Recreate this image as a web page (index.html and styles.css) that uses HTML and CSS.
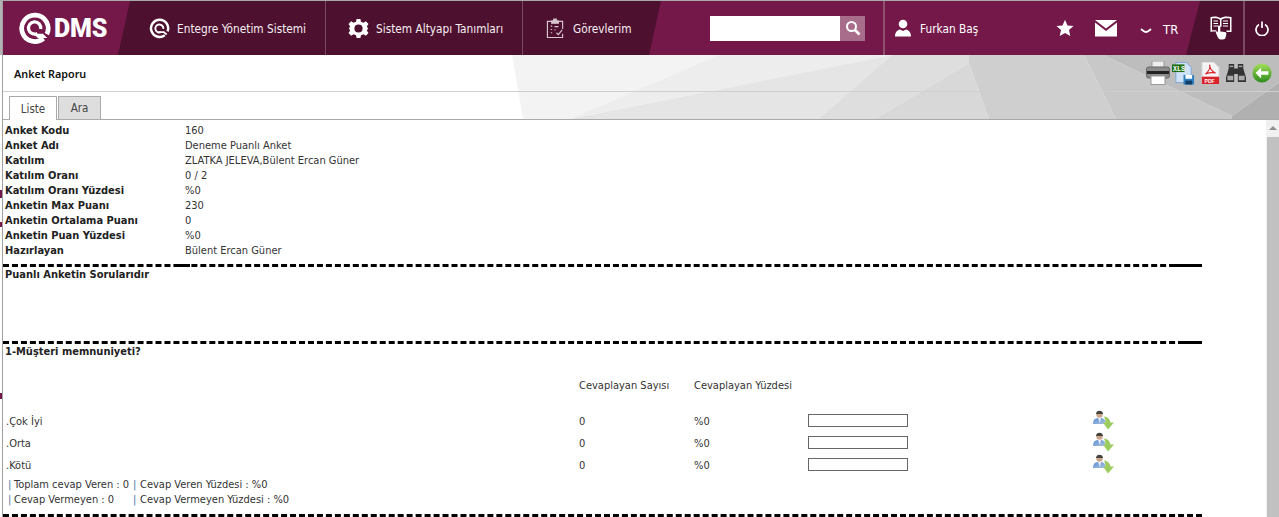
FILE: index.html
```html
<!DOCTYPE html>
<html lang="tr">
<head>
<meta charset="utf-8">
<title>Anket Raporu</title>
<link rel="stylesheet" href="styles.css">
</head>
<body>
<div class="edge"><i class="spot s1"></i><i class="spot s2"></i><i class="spot s3"></i></div>
<div class="app">
  <header class="topbar">
    <div class="brand">
      <svg class="logo-q" viewBox="0 0 36 36" width="34" height="34"><path d="M27 29A14 14 0 1 1 30.500 24.500" fill="none" stroke="#fff" stroke-width="5"/><path d="M20.500 23.800A6.500 6.500 0 1 1 24 19" fill="none" stroke="#fff" stroke-width="3.500"/><path d="M16 24h10.500l4.500 4.500H21z" fill="#fff"/></svg>
      <span class="logo-text">DMS</span>
    </div>
    <nav class="nav">
      <a class="nav-item w1">
        <svg viewBox="0 0 22 22" width="21" height="21" fill="none" stroke="#fff"><path d="M16.500 18A9 9 0 1 1 19.500 14" stroke-width="2.600"/><path d="M12.500 14.800A4.200 4.200 0 1 1 15 11.500" stroke-width="2"/><path d="M10 14.800h5.500l3 2.500" stroke-width="1.800"/></svg>
        <span>Entegre Yönetim Sistemi</span>
      </a>
      <a class="nav-item w2">
        <svg viewBox="0 0 22 22" width="21" height="21"><path fill="#fff" d="M9 1h4l.6 3 2.600 1.100 2.500-1.700 2.800 2.800-1.700 2.500L20.900 11l-1.100 2.300 1.700 2.500-2.800 2.800-2.500-1.700-2.600 1.100L13 21H9l-.6-3-2.600-1.100-2.500 1.700-2.800-2.800 1.700-2.500L1.100 11l1.100-2.300L.5 6.200l2.800-2.800 2.500 1.700L8.400 4z"/><circle cx="11" cy="11" r="4.300" fill="#4d102f"/></svg>
        <span>Sistem Altyapı Tanımları</span>
      </a>
      <a class="nav-item w3">
        <svg viewBox="0 0 20 22" width="19" height="21" fill="none" stroke="#d9c6d0" stroke-width="1.200"><path d="M5.500 3.500H1.500v17h16v-4M13.500 3.500h4v8"/><path d="M6 5.500V3h2.200V1.200h2.600V3H13v2.500z" fill="#d9c6d0"/><path d="M5 8.500h1.500M5 12h1.500M5 15.500h1.500M9 9h4M9 12.500h1"/><path d="M11 15.500l2 2 4-5"/></svg>
        <span>Görevlerim</span>
      </a>
    </nav>
    <form class="search">
      <input class="search-input" type="text" aria-label="Ara">
      <button class="search-btn" type="button" aria-label="Ara"><svg viewBox="0 0 16 16" width="16" height="16" fill="none" stroke="#fff"><circle cx="6.500" cy="6.500" r="4.500" stroke-width="2"/><path d="M10 10l4.500 4.500" stroke-width="2.600"/></svg></button>
    </form>
    <div class="user">
      <svg viewBox="0 0 16 18" width="16" height="18" fill="#fff"><circle cx="8" cy="5" r="4.300"/><path d="M0 17.500c0-4.500 2.500-6.500 5-7l3 1.500 3-1.500c2.500.5 5 2.500 5 7z"/></svg>
      <span>Furkan Baş</span>
    </div>
    <div class="tools">
      <svg class="star" viewBox="0 0 18 18" width="18" height="18"><path fill="#fff" d="M9 .8l2.500 5.600 6 .6-4.500 4 1.300 6L9 14l-5.300 3 1.300-6L.5 7l6-.6z"/></svg>
      <svg class="mail" viewBox="0 0 22 17" width="22" height="17"><path fill="#fff" d="M0 0h22L11 8.500zM0 2.500l11 8.500 11-8.500V16.500H0z"/></svg>
      <svg class="chev" viewBox="0 0 12 6" width="12" height="6" fill="none" stroke="#fff" stroke-width="1.800"><path d="M1 1c2 1.500 3.500 3 5 3s3-1.500 5-3"/></svg>
      <span class="lang">TR</span>
    </div>
    <div class="side">
      <div class="side-btn book">
        <svg viewBox="0 0 22 24" width="22" height="24"><path fill="#fff" d="M.5 1C4 0 8 .3 10.500 2c2.500-1.700 6.500-2 11-1v15h-5v-1.500h3.500V2.500c-3-.5-6.500-.3-8.500 1.200v7h-1.500v-7C8 2.200 5 2 2 2.500v11.800c1.500-.2 3-.2 4.500.1v1.400C4.500 15.500 2.500 15.500.5 16z"/><path stroke="#fff" stroke-width="1" d="M3.500 5H8M3.500 7.500H8M3.500 10H8M13 5h5M13 7.500h5M13 10h5"/><path fill="#fff" d="M8 10.500c0-1.400 2.300-1.400 2.300 0v5l4.500.5c1.500.3 1.700 1.200 1.500 2.500l-.7 3c-.3 1.200-1 2-3 2h-2c-1.500 0-2-1-3-2.500L6 17c-.7-1.200.8-2 1.800-1l.2.500z"/></svg>
      </div>
      <div class="side-btn power">
        <svg viewBox="0 0 14 15" width="14" height="15" fill="none" stroke="#fff" stroke-width="1.700"><path d="M4 3.500a6 6 0 1 0 6 0M7 .5v6.500"/></svg>
      </div>
    </div>
  </header>

  <section class="pagehead">
    <svg class="poly" viewBox="0 0 1276 65" preserveAspectRatio="none" aria-hidden="true">
      <path fill="#f3f3f3" d="M509 0H715L567 65H520z"/>
      <path fill="#ededed" d="M715 0H889L567 65z"/>
      <path fill="#e5e5e5" d="M889 0L815 65H567z"/>
      <path fill="#dedede" d="M889 0H966V8L872 65H815z"/>
      <path fill="#d8d8d8" d="M966 8L986 65H872z"/>
      <path fill="#cfcfcf" d="M966 0H1081L1113 65H986L966 8z"/>
      <path fill="#c8c8c8" d="M1081 0H1100L1229 62V65H1113z"/>
      <path fill="#bdbdbd" d="M1100 0H1276V28L1229 62z"/>
      <path fill="#b0b0b0" d="M1276 28V65H1229V62z"/>
    </svg>
    <div class="titlebar">
      <h1>Anket Raporu</h1>
      <div class="actions">
        <svg class="a-print" viewBox="0 0 24 24" width="24" height="24"><rect x="6" y="0" width="12" height="7" fill="#eee" stroke="#999"/><rect x="0.500" y="6" width="23" height="11" rx="2" fill="#8b8b8b" stroke="#666"/><rect x="1" y="10" width="22" height="3" fill="#222"/><rect x="5" y="15" width="14" height="8.500" fill="#fff" stroke="#999"/></svg>
        <svg viewBox="0 0 24 24" width="23" height="24"><path d="M4 1h11l5 5v16H4z" fill="#cfe2f7" stroke="#7ea6d3"/><rect x="0" y="3" width="13" height="8" fill="#1f6e12"/><rect x="12" y="14" width="11" height="10" fill="#2f7fc1"/><rect x="14" y="14" width="7" height="4" fill="#fff"/><rect x="14" y="20" width="7" height="4" fill="#123e66"/><text class="xls" x="1" y="10">XLS</text></svg>
        <svg viewBox="0 0 22 24" width="19" height="22" preserveAspectRatio="none"><path d="M1 0h14l6 6v18H1z" fill="#f4f4f4" stroke="#ccc"/><path d="M5 13c3-1 6-6 5-10 0 4 3 8 7 9-4-1-9 0-12 1z" fill="none" stroke="#d8232a" stroke-width="1.200"/><rect x="1" y="16" width="20" height="8" fill="#d8232a"/><text class="pdf" x="4" y="23">PDF</text></svg>
        <svg viewBox="0 0 22 22" width="20" height="20"><path d="M3 1h6v5h4V1h6v5l3 10v5h-9v-9h-4v9H0v-5l3-10z" fill="#333"/><rect x="1.500" y="14" width="6.500" height="5" fill="#aaa"/><rect x="14" y="14" width="6.500" height="5" fill="#aaa"/><rect x="4" y="3" width="4" height="1.500" fill="#aaa"/><rect x="14" y="3" width="4" height="1.500" fill="#aaa"/></svg>
        <svg viewBox="0 0 22 22" width="20" height="20"><defs><linearGradient id="gb" x1="0" y1="0" x2="0" y2="1"><stop offset="0" stop-color="#a4e05a"/><stop offset="1" stop-color="#2d8a1c"/></linearGradient></defs><circle cx="11" cy="11" r="10.500" fill="url(#gb)"/><path d="M10 5l-6 6 6 6v-4h8V9h-8z" fill="#fff"/></svg>
      </div>
    </div>
    <div class="tabs">
      <a class="tab active">Liste</a>
      <a class="tab">Ara</a>
    </div>
  </section>

  <div class="body">
    <main class="content">
      <dl class="meta">
        <dt>Anket Kodu</dt><dd>160</dd>
        <dt>Anket Adı</dt><dd>Deneme Puanlı Anket</dd>
        <dt>Katılım</dt><dd>ZLATKA JELEVA,Bülent Ercan Güner</dd>
        <dt>Katılım Oranı</dt><dd>0 / 2</dd>
        <dt>Katılım Oranı Yüzdesi</dt><dd>%0</dd>
        <dt>Anketin Max Puanı</dt><dd>230</dd>
        <dt>Anketin Ortalama Puanı</dt><dd>0</dd>
        <dt>Anketin Puan Yüzdesi</dt><dd>%0</dd>
        <dt>Hazırlayan</dt><dd>Bülent Ercan Güner</dd>
      </dl>
      <div class="rule r1"></div>
      <h2 class="sect s-intro">Puanlı Anketin Sorularıdır</h2>
      <div class="rule r2"></div>
      <h2 class="sect s-q">1-Müşteri memnuniyeti?</h2>
      <div class="answers">
        <div class="ans head"><span></span><span>Cevaplayan Sayısı</span><span>Cevaplayan Yüzdesi</span><span></span><span></span></div>
        <div class="ans"><span>.Çok İyi</span><span>0</span><span>%0</span><span class="bar"></span><svg class="dl" viewBox="0 0 22 20" width="22" height="20"><use href="#userdl"/></svg></div>
        <div class="ans"><span>.Orta</span><span>0</span><span>%0</span><span class="bar"></span><svg class="dl" viewBox="0 0 22 20" width="22" height="20"><use href="#userdl"/></svg></div>
        <div class="ans"><span>.Kötü</span><span>0</span><span>%0</span><span class="bar"></span><svg class="dl" viewBox="0 0 22 20" width="22" height="20"><use href="#userdl"/></svg></div>
      </div>
      <div class="totals">
        <b>|</b><span>Toplam cevap Veren : 0</span><b>|</b><span>Cevap Veren Yüzdesi : %0</span>
        <b>|</b><span>Cevap Vermeyen : 0</span><b>|</b><span>Cevap Vermeyen Yüzdesi : %0</span>
      </div>
      <div class="rule r3"></div>
    </main>
    <div class="scrollbar"><i class="arrow"></i><i class="thumb"></i></div>
  </div>
</div>
<svg class="defs" width="0" height="0" aria-hidden="true"><defs>
  <linearGradient id="ug" x1="0" y1="0" x2="1" y2="1"><stop offset="0" stop-color="#5d8fd0"/><stop offset="1" stop-color="#a9c2e4"/></linearGradient>
  <g id="userdl">
    <circle cx="6.500" cy="4.500" r="3.200" fill="#c9a58c"/><path d="M3 4c0-4.500 7-4.500 7 0z" fill="#45443f"/>
    <path d="M0 14c0-4.500 2-6 6.500-6s6 1.500 6 6z" fill="url(#ug)"/><path d="M5 8h3l-1 5z" fill="#eef"/>
    <path d="M11 6.500c4 .5 6 3 6.500 6h3.500l-6 7-5-7h2.500c0-2-.5-4-1.500-6z" fill="#9ccc5e"/>
  </g>
</defs></svg>
</body>
</html>
```
FILE: styles.css
```css
* { box-sizing: border-box; }
html, body { height: 517px; overflow: hidden; }
body {
  margin: 0;
  display: flex;
  background: #fff;
  color: #333;
  font: 11px "DejaVu Sans Condensed", "DejaVu Sans", sans-serif;
  border-top: 1px solid #a8a8a8;
}
.edge {
  width: 3px;
  flex: none;
  position: relative;
  background: linear-gradient(#b4b4b4 54px, #fff 54px);
  border-right: 1px solid #a0a0a0;
}
.spot { position: absolute; left: 0; width: 2px; background: #74184a; }
.s1 { top: 189px; height: 8px; }
.s2 { top: 221px; height: 5px; }
.s3 { top: 392px; height: 6px; }
.app { flex: 1; min-width: 0; display: flex; flex-direction: column; }
.defs { position: absolute; }

/* top bar */
.topbar {
  height: 54px;
  flex: none;
  display: flex;
  align-items: center;
  color: #fff;
  background: #74184a;
}
.brand {
  width: 122px;
  height: 54px;
  display: flex;
  align-items: center;
  padding-left: 15px;
  flex: none;
}
.logo-text { font: 900 25px/1 Roboto, "Liberation Sans", sans-serif; margin-left: 2px; letter-spacing: -.2px; }
.nav {
  width: 543px;
  height: 54px;
  display: flex;
  flex: none;
  background: #4d102f;
  margin-left: -7px;
  clip-path: polygon(12px 0, 100% 0, calc(100% - 12px) 100%, 0 100%);
}
.nav-item {
  display: flex;
  align-items: center;
  gap: 7px;
  height: 54px;
  font-size: 11.750px;
  color: #f6eef2;
  border-right: 1px solid #7a4a63;
}
.nav-item span, .user span { margin-top: 1px; }
.w1 { width: 208px; padding-left: 31px; }
.w2 { width: 197px; padding-left: 22px; gap: 7px; }
.w3 { flex: 1; border-right: 0; padding-left: 23px; gap: 8px; }
.search { display: flex; margin-left: 49px; flex: none; }
.search-input { width: 130px; height: 25px; border: 0; padding: 0; background: #fff; display: block; }
.search-btn {
  width: 25px; height: 25px; border: 0; padding: 0;
  background: #a86d8b;
  display: flex; align-items: center; justify-content: center;
}
.user {
  margin-left: 18px;
  height: 54px;
  width: 165px;
  display: flex;
  align-items: center;
  gap: 9px;
  padding-left: 10px;
  border-left: 2px solid #8f4f70;
  font-size: 11.750px;
  flex: none;
}
.tools { display: flex; align-items: center; width: 150px; flex: none; height: 54px; padding-left: 8px; }
.mail { margin-left: 21px; }
.chev { margin-left: 23px; margin-top: 5px; }
.lang { margin-left: 11px; margin-top: 2px; font-size: 13px; }
.side {
  flex: 1;
  height: 54px;
  display: flex;
  background: #4d102f;
  clip-path: polygon(14px 0, 100% 0, 100% 100%, 0 100%);
  margin-left: -12px;
}
.side-btn { height: 54px; display: flex; align-items: center; }
.book { width: 57px; padding-left: 24px; }
.power { flex: 1; justify-content: center; border-left: 2px solid #7a4a63; }

/* page head */
.pagehead { height: 65px; flex: none; position: relative; border-bottom: 1px solid #aaa; display: flex; flex-direction: column; }
.poly { position: absolute; inset: 0; width: 100%; height: 100%; }
.titlebar {
  position: relative;
  height: 37px;
  flex: none;
  display: flex;
  align-items: center;
  justify-content: space-between;
  border-bottom: 1px solid #cfcfcf;
  padding: 0 7px 0 11px;
}
h1 { margin: 0; font: 600 10.800px "Noto Sans", sans-serif; color: #111; }
.actions { display: flex; align-items: center; gap: 6px; margin-top: -1px; }
.a-print { margin-right: -4px; }
.xls { font: 700 7px "Liberation Mono", monospace; fill: #fff; }
.pdf { font: 700 6px "Liberation Sans", sans-serif; fill: #fff; }
.tabs { position: relative; display: flex; gap: 1px; padding: 4px 0 0 6px; height: 27px; }
.tab {
  height: 24px;
  display: flex;
  align-items: center;
  justify-content: center;
  font-size: 11.500px;
  color: #444;
  border: 1px solid #aaa;
  background: #dedede;
  width: 43px;
}
.tab.active { width: 48px; background: #fff; border-bottom: 0; position: relative; z-index: 1; }

/* body */
.body { flex: 1; min-height: 0; display: flex; }
.content { flex: 1; min-width: 0; overflow: hidden; padding-top: 3px; }
.scrollbar { width: 13px; flex: none; background: #f1f1f1; display: flex; flex-direction: column; }
.arrow { height: 17px; flex: none; position: relative; }
.arrow::before {
  content: "";
  position: absolute;
  left: 3px; top: 6px;
  border: 4px solid transparent;
  border-top: 0;
  border-bottom: 4px solid #8f8f8f;
}
.thumb { flex: 1; background: #c1c1c1; margin-left: 1px; }

.meta {
  margin: 0;
  display: grid;
  grid-template-columns: 180px 1fr;
  grid-auto-rows: 15px;
  line-height: 15px;
  padding-left: 2px;
}
.meta dt { font-weight: 700; color: #222; }
.meta dd { margin: 0; color: #333; }
.rule { border-top: 3px dashed #000; width: 1199px; height: 0; position: relative; }
.rule::after { content: ""; position: absolute; right: 0; top: -3px; height: 3px; background: #000; }
.r1 { margin-top: 6px; }
.r1::after { width: 29px; }
.r1::before { content: ""; position: absolute; left: 175px; top: -3px; width: 12px; height: 3px; background: #000; }
.r2::after { width: 18px; }
.sect { margin: 0; font-size: 11px; font-weight: 700; color: #222; line-height: 15px; padding-left: 2px; }
.s-intro { height: 74px; }
.s-q { height: 34px; }
.answers { display: flex; flex-direction: column; }
.ans {
  display: grid;
  grid-template-columns: 573px 115px 114px 285px 22px;
  height: 22px;
  align-items: center;
  padding-left: 3px;
  color: #333;
}
.ans.head { height: 32px; align-items: start; line-height: 15px; }
.bar { width: 100px; height: 13px; border: 1px solid #666; background: #fff; display: block; margin-top: -1px; }
.dl { display: block; margin-top: -2px; }
.totals {
  display: grid;
  grid-template-columns: 6px 119px 7px 1fr;
  grid-auto-rows: 15px;
  line-height: 15px;
  padding: 1px 0 0 5px;
  height: 38px;
}
.totals b { font-weight: 400; color: #3a78a8; }
```
